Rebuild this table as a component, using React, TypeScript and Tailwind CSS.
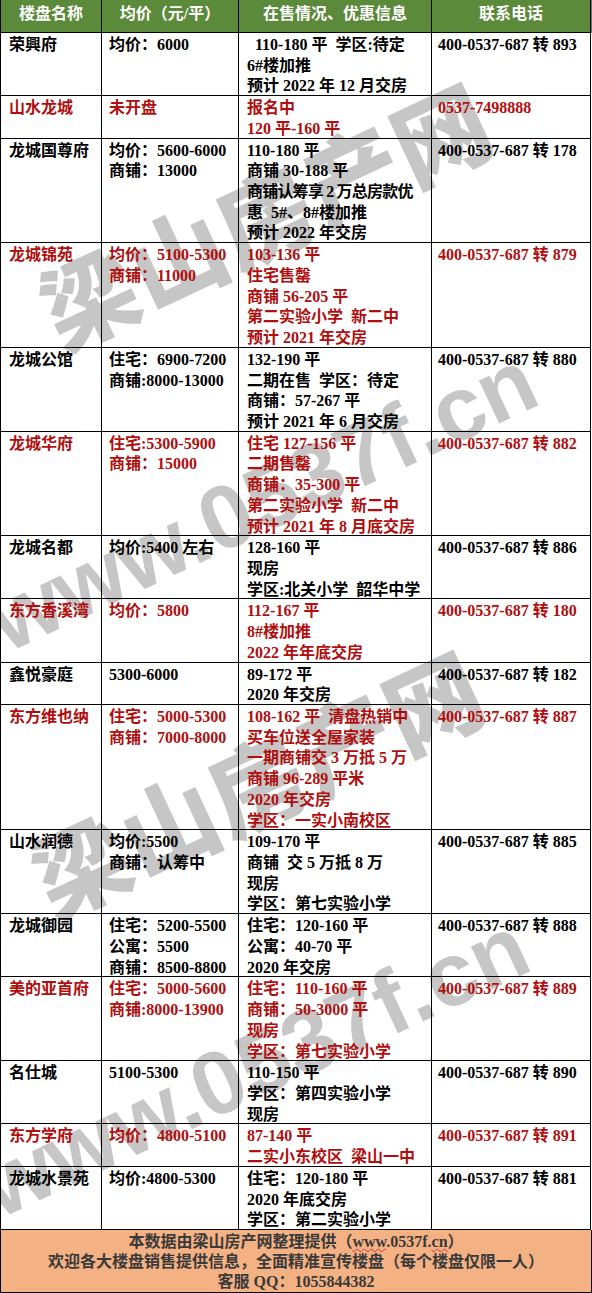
import React from "react";

type Row = {
  name: string;
  red?: boolean;
  price: string[];
  info: string[];
  phone: string;
  tightLine?: number;
};

const rows: Row[] = [
  {
    name: "荣興府",
    price: ["均价：6000"],
    info: ["  110-180 平  学区:待定", "6#楼加推", "预计 2022 年 12 月交房"],
    phone: "400-0537-687 转 893",
  },
  {
    name: "山水龙城",
    red: true,
    price: ["未开盘"],
    info: ["报名中", "120 平-160 平"],
    phone: "0537-7498888",
  },
  {
    name: "龙城国尊府",
    price: ["均价：5600-6000", "商铺：13000"],
    info: ["110-180 平", "商铺 30-188 平", "商铺认筹享 2 万总房款优", "惠  5#、8#楼加推", "预计 2022 年交房"],
    phone: "400-0537-687 转 178",
    tightLine: 2,
  },
  {
    name: "龙城锦苑",
    red: true,
    price: ["均价：5100-5300", "商铺：11000"],
    info: ["103-136 平", "住宅售罄", "商铺 56-205 平", "第二实验小学  新二中", "预计 2021 年交房"],
    phone: "400-0537-687 转 879",
  },
  {
    name: "龙城公馆",
    price: ["住宅：6900-7200", "商铺:8000-13000"],
    info: ["132-190 平", "二期在售  学区：待定", "商铺：57-267 平", "预计 2021 年 6 月交房"],
    phone: "400-0537-687 转 880",
  },
  {
    name: "龙城华府",
    red: true,
    price: ["住宅:5300-5900", "商铺：15000"],
    info: ["住宅 127-156 平", "二期售罄", "商铺：35-300 平", "第二实验小学  新二中", "预计 2021 年 8 月底交房"],
    phone: "400-0537-687 转 882",
  },
  {
    name: "龙城名都",
    price: ["均价:5400 左右"],
    info: ["128-160 平", "现房", "学区:北关小学  韶华中学"],
    phone: "400-0537-687 转 886",
  },
  {
    name: "东方香溪湾",
    red: true,
    price: ["均价：5800"],
    info: ["112-167 平", "8#楼加推", "2022 年年底交房"],
    phone: "400-0537-687 转 180",
  },
  {
    name: "鑫悦豪庭",
    price: ["5300-6000"],
    info: ["89-172 平", "2020 年交房"],
    phone: "400-0537-687 转 182",
  },
  {
    name: "东方维也纳",
    red: true,
    price: ["住宅：5000-5300", "商铺：7000-8000"],
    info: ["108-162 平  清盘热销中", "买车位送全屋家装", "一期商铺交 3 万抵 5 万", "商铺 96-289 平米", "2020 年交房", "学区：一实小南校区"],
    phone: "400-0537-687 转 887",
  },
  {
    name: "山水润德",
    price: ["均价:5500", "商铺：认筹中"],
    info: ["109-170 平", "商铺  交 5 万抵 8 万", "现房", "学区：第七实验小学"],
    phone: "400-0537-687 转 885",
  },
  {
    name: "龙城御园",
    price: ["住宅：5200-5500", "公寓：5500", "商铺：8500-8800"],
    info: ["住宅：120-160 平", "公寓：40-70 平", "2020 年交房"],
    phone: "400-0537-687 转 888",
  },
  {
    name: "美的亚首府",
    red: true,
    price: ["住宅：5000-5600", "商铺:8000-13900"],
    info: ["住宅：110-160 平", "商铺：50-3000 平", "现房", "学区：第七实验小学"],
    phone: "400-0537-687 转 889",
  },
  {
    name: "名仕城",
    price: ["5100-5300"],
    info: ["110-150 平", "学区：第四实验小学", "现房"],
    phone: "400-0537-687 转 890",
  },
  {
    name: "东方学府",
    red: true,
    price: ["均价：4800-5100"],
    info: ["87-140 平", "二实小东校区  梁山一中"],
    phone: "400-0537-687 转 891",
  },
  {
    name: "龙城水景苑",
    price: ["均价:4800-5300"],
    info: ["住宅：120-180 平", "2020 年底交房", "学区：第二实验小学"],
    phone: "400-0537-687 转 881",
  },
];

function Lines({ lines, tight }: { lines: string[]; tight?: number }) {
  return (
    <div className="translate-y-[2px]">
      {lines.map((l, i) => (
        <div
          key={i}
          className={
            tight === i
              ? "whitespace-pre leading-[20.72px] tracking-[-0.8px]"
              : "whitespace-pre leading-[20.72px]"
          }
        >
          {l}
        </div>
      ))}
    </div>
  );
}

export default function App() {
  return (
    <div className="relative w-[592px] h-[1293px] overflow-hidden bg-white font-['Liberation_Serif','Noto_Sans_CJK_SC',serif] text-[16px] font-bold text-black">
      {/* watermarks */}
      <div className="pointer-events-none absolute inset-0">
        <div className="absolute left-[264px] top-[212px] -translate-x-1/2 -translate-y-1/2 rotate-[-25deg] whitespace-nowrap leading-none text-[95px] font-black tracking-[2px] text-[#c6c6c6] font-['Noto_Sans_CJK_SC',sans-serif]">
          梁山房产网
        </div>
        <div className="absolute left-[262px] top-[500px] -translate-x-1/2 -translate-y-1/2 rotate-[-25deg] whitespace-nowrap leading-none text-[90px] font-bold text-[#c6c6c6] font-['Liberation_Sans',Arial,sans-serif]">
          www.0537f.cn
        </div>
        <div className="absolute left-[256px] top-[780px] -translate-x-1/2 -translate-y-1/2 rotate-[-25deg] whitespace-nowrap leading-none text-[95px] font-black tracking-[2px] text-[#c6c6c6] font-['Noto_Sans_CJK_SC',sans-serif]">
          梁山房产网
        </div>
        <div className="absolute left-[254px] top-[1066px] -translate-x-1/2 -translate-y-1/2 rotate-[-25deg] whitespace-nowrap leading-none text-[90px] font-bold text-[#c6c6c6] font-['Liberation_Sans',Arial,sans-serif]">
          www.0537f.cn
        </div>
      </div>

      <div className="relative border-l border-black">
        {/* header */}
        <div className="grid grid-cols-[101px_137px_193px_159px] bg-[#5b8a3a] text-white">
          {["楼盘名称", "均价（元/平）", "在售情况、优惠信息", "联系电话"].map((h) => (
            <div
              key={h}
              className="h-[33px] border-r border-b border-black pt-[4px] text-center leading-[20px] whitespace-nowrap"
            >
              {h}
            </div>
          ))}
        </div>

        {/* rows */}
        {rows.map((r) => (
          <div
            key={r.name}
            className={
              r.red
                ? "grid grid-cols-[101px_137px_193px_159px] text-[#b00f0f]"
                : "grid grid-cols-[101px_137px_193px_159px] text-black"
            }
          >
            <div className="border-r border-b border-black pl-[8px]">
              <Lines lines={[r.name]} />
            </div>
            <div className="border-r border-b border-black pl-[7px]">
              <Lines lines={r.price} />
            </div>
            <div className="border-r border-b border-black pl-[8px]">
              <Lines lines={r.info} tight={r.tightLine} />
            </div>
            <div className="border-r border-b border-black pl-[6px]">
              <Lines lines={[r.phone]} />
            </div>
          </div>
        ))}

        {/* footer */}
        <div className="border-r border-b border-black bg-[#f4b183] pt-[2px] text-center leading-[20px] text-[#3a3a3a]">
          <div className="whitespace-nowrap">
            本数据由梁山房产网整理提供（
            <span className="underline decoration-wavy decoration-[#e03030] decoration-1 underline-offset-[1px]">www</span>
            .0537f.
            <span className="underline decoration-wavy decoration-[#e03030] decoration-1 underline-offset-[1px]">cn</span>）
          </div>
          <div className="whitespace-nowrap">欢迎各大楼盘销售提供信息，全面精准宣传楼盘（每个楼盘仅限一人）</div>
          <div className="whitespace-nowrap">客服 QQ：1055844382</div>
        </div>
      </div>
    </div>
  );
}
